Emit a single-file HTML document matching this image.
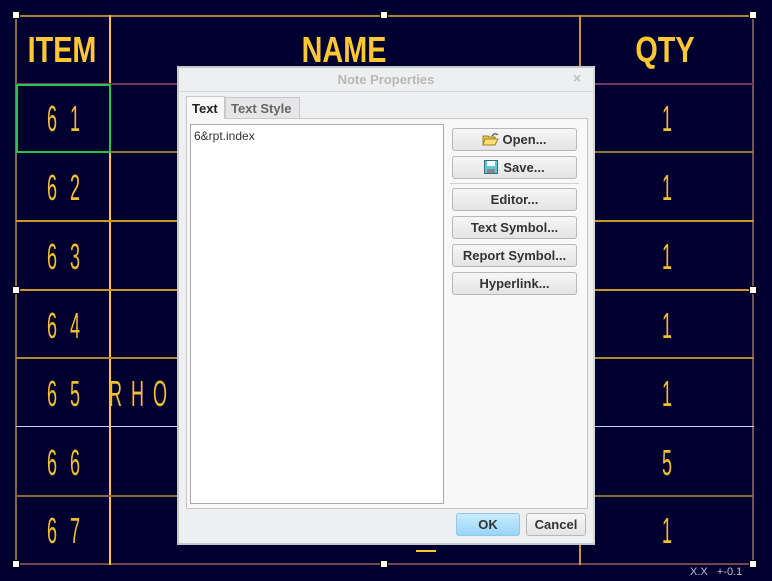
<!DOCTYPE html>
<html><head><meta charset="utf-8"><style>
*{margin:0;padding:0;box-sizing:border-box}
body{width:772px;height:581px;background:#000030;position:relative;overflow:hidden;font-family:"Liberation Sans",sans-serif}
.a{position:absolute}
.h{position:absolute;height:2px}
.v{position:absolute;width:2px}
.hd{position:absolute;top:30px;font:bold 36px "Liberation Sans",sans-serif;color:#ffc830;transform:scaleX(.8);transform-origin:center;line-height:40px;text-align:center;width:200px}
.d{position:absolute;font:36px "Liberation Sans",sans-serif;color:#f0c030;transform:scaleX(.5);transform-origin:left;line-height:36px;font-weight:normal}
.hn{position:absolute;width:8px;height:8px;background:#fff;border:1px solid #000}
.btn{position:absolute;left:452px;width:125px;height:23px;border:1px solid #b8b8b8;border-radius:3px;background:linear-gradient(#f6f6f6,#e4e4e4);font:bold 13px "Liberation Sans",sans-serif;color:#333;text-align:center;line-height:21px}
</style></head><body>
<!-- table lines -->
<div class="h" style="left:16px;top:15px;width:738px;background:#a88038"></div>
<div class="h" style="left:16px;top:563px;width:738px;background:#704850"></div>
<div class="v" style="left:15px;top:15px;height:550px;background:#8a6a40"></div>
<div class="v" style="left:752px;top:15px;height:550px;background:#705060"></div>
<div class="v" style="left:109px;top:15px;height:550px;background:#ffc820"></div>
<div class="v" style="left:579px;top:15px;height:550px;background:#c89828"></div>
<div class="h" style="left:16px;top:83px;width:738px;background:#703a60"></div>
<div class="h" style="left:16px;top:151px;width:738px;background:#907030"></div>
<div class="h" style="left:16px;top:220px;width:738px;background:#c89828"></div>
<div class="h" style="left:16px;top:289px;width:738px;background:#c89828"></div>
<div class="h" style="left:16px;top:357px;width:738px;background:#b08830"></div>
<div class="h" style="left:16px;top:426px;width:738px;background:#d0d0ff;height:1px"></div>
<div class="h" style="left:16px;top:495px;width:738px;background:#8a6a30"></div>
<div class="a" style="left:16px;top:84px;width:95px;height:69px;border:2px solid #30c050"></div>
<div class="hd" style="left:-38px">ITEM</div>
<div class="hd" style="left:244px">NAME</div>
<div class="hd" style="left:565px">QTY</div>
<!-- numbers -->
<div class="d" style="left:47px;top:101px">6</div><div class="d" style="left:70px;top:101px">1</div>
<div class="d" style="left:47px;top:170px">6</div><div class="d" style="left:70px;top:170px">2</div>
<div class="d" style="left:47px;top:239px">6</div><div class="d" style="left:70px;top:239px">3</div>
<div class="d" style="left:47px;top:308px">6</div><div class="d" style="left:70px;top:308px">4</div>
<div class="d" style="left:47px;top:376px">6</div><div class="d" style="left:70px;top:376px">5</div>
<div class="d" style="left:47px;top:445px">6</div><div class="d" style="left:70px;top:445px">6</div>
<div class="d" style="left:47px;top:513px">6</div><div class="d" style="left:70px;top:513px">7</div>
<div class="d" style="left:109px;top:376px;letter-spacing:18px">RHOM</div>
<div class="d" style="left:662px;top:101px">1</div>
<div class="d" style="left:662px;top:170px">1</div>
<div class="d" style="left:662px;top:239px">1</div>
<div class="d" style="left:662px;top:308px">1</div>
<div class="d" style="left:662px;top:376px">1</div>
<div class="d" style="left:662px;top:445px">5</div>
<div class="d" style="left:662px;top:513px">1</div>
<div class="a" style="left:416px;top:550px;width:20px;height:2px;background:#ffc830"></div>
<div class="a" style="left:690px;top:566px;font-size:11px;color:#c0c0d0">X.X&nbsp;&nbsp;&nbsp;+-0.1</div>
<!-- handles -->
<div class="hn" style="left:12px;top:11px"></div>
<div class="hn" style="left:380px;top:11px"></div>
<div class="hn" style="left:749px;top:11px"></div>
<div class="hn" style="left:12px;top:286px"></div>
<div class="hn" style="left:749px;top:286px"></div>
<div class="hn" style="left:12px;top:560px"></div>
<div class="hn" style="left:380px;top:560px"></div>
<div class="hn" style="left:749px;top:560px"></div>
<!-- dialog -->
<div class="a" style="left:177px;top:66px;width:418px;height:479px;background:#eeeff0;border:2px solid #c8c8c8;border-right-color:#d8d8d8"></div>
<div class="a" style="left:179px;top:68px;width:414px;height:24px;border-bottom:1px solid #d8d8d8;text-align:center;font:bold 13px 'Liberation Sans',sans-serif;color:#b8b8b8;line-height:24px">Note Properties</div>
<div class="a" style="left:573px;top:70px;font:bold 14px 'Liberation Sans',sans-serif;color:#c0c0c0">×</div>
<div class="a" style="left:186px;top:118px;width:402px;height:391px;border:1px solid #c8c8c8;background:#f8f8f8"></div>
<div class="a" style="left:186px;top:96px;width:39px;height:23px;border:1px solid #c8c8c8;border-bottom:none;background:#f8f8f8;font:bold 13px 'Liberation Sans',sans-serif;color:#222;padding:4px 0 0 5px">Text</div>
<div class="a" style="left:225px;top:97px;width:75px;height:21px;border:1px solid #c8c8c8;border-bottom:none;background:#e6e6e8;font:bold 13px 'Liberation Sans',sans-serif;color:#666;padding:3px 0 0 5px">Text Style</div>
<div class="a" style="left:190px;top:124px;width:254px;height:380px;border:1px solid #a8a8a8;background:#fff;font-size:12px;color:#333;padding:4px 3px">6&amp;rpt.index</div>
<div class="btn" style="top:128px"><svg width="17" height="14" style="vertical-align:-2px;margin-right:3px" viewBox="0 0 17 14"><path d="M1 4h5l1 1h6v8H1z" fill="#e8c850" stroke="#a08020"/><path d="M3 7h13l-3 6H1z" fill="#fde070" stroke="#a08020"/><path d="M10 4q3-4 6-1" fill="none" stroke="#555" stroke-width="1.2"/></svg>Open...</div>
<div class="btn" style="top:156px"><svg width="14" height="14" style="vertical-align:-2px;margin-right:5px" viewBox="0 0 14 14"><rect x="0.5" y="0.5" width="13" height="13" fill="#60c8d8" stroke="#307080"/><rect x="3" y="1" width="8" height="5" fill="#fff"/><rect x="3" y="9" width="8" height="4" fill="#888"/></svg>Save...</div>
<div class="a" style="left:450px;top:183px;width:129px;height:1px;background:#d0d0d0"></div>
<div class="btn" style="top:188px">Editor...</div>
<div class="btn" style="top:216px">Text Symbol...</div>
<div class="btn" style="top:244px">Report Symbol...</div>
<div class="btn" style="top:272px">Hyperlink...</div>
<div class="btn" style="left:456px;top:513px;width:64px;background:linear-gradient(#c8ecff,#98d4f8);border-color:#90c8e8">OK</div>
<div class="btn" style="left:526px;top:513px;width:60px">Cancel</div>
</body></html>
